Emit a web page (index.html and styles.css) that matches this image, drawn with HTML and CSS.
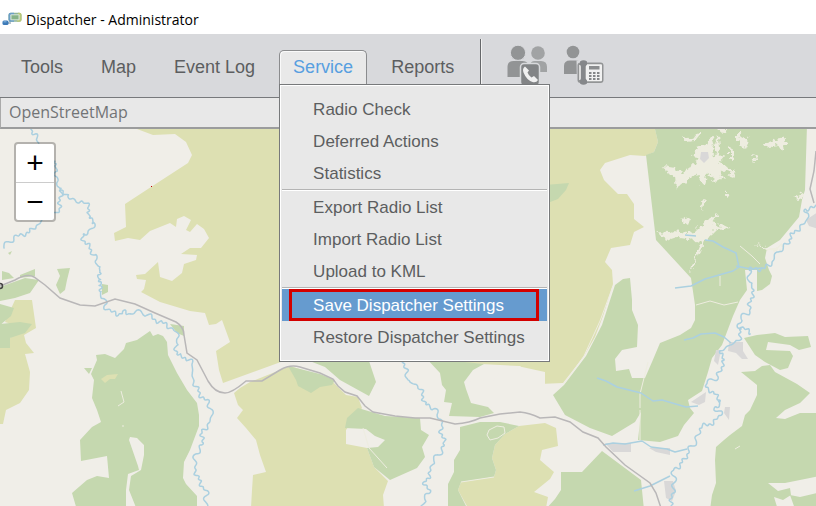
FILE: index.html
```html
<!DOCTYPE html>
<html lang="en">
<head>
<meta charset="utf-8">
<title>Dispatcher - Administrator</title>
<link rel="stylesheet" href="styles.css">
<script src="rivers.js" defer></script>
</head>
<body>
<header class="titlebar">
  <svg class="app-icon" viewBox="0 0 20 15" aria-hidden="true">
    <path d="M5 11h3V8" fill="none" stroke="#b9c4cc" stroke-width="2"/>
    <rect x="0.5" y="8.5" width="6" height="4.5" rx="1.5" fill="#3d7ab8"/>
    <rect x="1.5" y="9" width="3" height="1.5" fill="#6fa3d2"/>
    <rect x="6.5" y="0.8" width="13" height="9" rx="2.5" fill="#8fb59a"/>
    <path d="M9 .8h-.5a2 2 0 0 0-2 2v5a2 2 0 0 0 2 2H12V.8z" fill="#6b9fc6"/>
    <path d="M16 .8h1.5a2 2 0 0 1 2 2v5a2 2 0 0 1-2 2H15z" fill="#b9c878"/>
    <rect x="8.3" y="2.3" width="9.4" height="6" rx="1" fill="#d5e3d6"/>
    <rect x="9.5" y="3.3" width="7" height="4" fill="#86b287"/>
  </svg>
  <span>Dispatcher - Administrator</span>
</header>

<nav class="menubar">
  <button class="menu-button" type="button">Tools</button>
  <button class="menu-button" type="button">Map</button>
  <button class="menu-button" type="button">Event Log</button>
  <div class="menu-group">
    <button class="menu-button open" type="button" aria-expanded="true">Service</button>
    <div class="dropdown">
      <button type="button">Radio Check</button>
      <button type="button">Deferred Actions</button>
      <button type="button">Statistics</button>
      <hr>
      <button type="button">Export Radio List</button>
      <button type="button">Import Radio List</button>
      <button type="button">Upload to KML</button>
      <hr>
      <button class="selected" type="button">Save Dispatcher Settings</button>
      <button type="button">Restore Dispatcher Settings</button>
    </div>
  </div>
  <button class="menu-button" type="button">Reports</button>
  <div class="tools">
    <button class="tool" type="button" aria-label="Group call">
      <svg viewBox="0 0 42 40">
        <circle cx="31" cy="8" r="6.8" fill="#a1a3a4"/>
        <path d="M23 27v-6q0-5 5-5h6q6 0 6 6v5z" fill="#a1a3a4"/>
        <circle cx="11" cy="7.800" r="7.600" fill="#929495" stroke="#d8d9dc"/>
        <path d="M.5 32V22q0-6 6-6h9q6 0 6 6v10z" fill="#929495"/>
        <rect x="13.5" y="18.5" width="19" height="22" rx="3.5" fill="#828486" stroke="#d8d9dc" stroke-width="1.5"/>
        <path d="M18 21.500q-3 2-1.500 6 3 7.500 9 9.500 4 .8 5.500-2l-4-4-2.500 1.500q-3-2-4-5l1.500-2z" fill="#f0f0f0"/>
      </svg>
    </button>
    <button class="tool" type="button" aria-label="Phone call">
      <svg viewBox="0 0 42 40">
        <circle cx="10" cy="7" r="6.300" fill="#929495"/>
        <path d="M1 29v-8q0-5.500 6-5.500h6q5 0 5 5v8.500z" fill="#929495"/>
        <path d="M13.500 15.500h9l3 1.500h14q2 0 2 2v18q0 2-2 2H26l-3 1.500h-9z" fill="#d8d9dc"/>
        <rect x="14.500" y="17.500" width="26" height="20.500" rx="3" fill="#929495"/>
        <rect x="16.200" y="20" width="1.600" height="15" fill="#ececec"/>
        <rect x="22.500" y="19.200" width="16.500" height="17" rx="1" fill="#f1f1f1"/>
        <rect x="26" y="21" width="10.500" height="3.500" fill="#8b8d8f"/>
        <path d="M26 28h2.500m1.500 0h2.500m1.500 0h2.500m-10.500 3h2.500m1.500 0h2.500m1.500 0h2.500m-10.500 3h2.500m1.500 0h2.500m1.500 0h2.500" fill="none" stroke="#848688" stroke-width="2"/>
        <path d="M17 16.500q3.500-2.500 7 0v3l-1.500 2v12l1.500 2v3q-3.500 2.500-7 0v-3l1-2v-12l-1-2z" fill="#85878a"/>
      </svg>
    </button>
  </div>
</nav>

<div class="source">OpenStreetMap</div>

<main class="map">
  <svg class="terrain" viewBox="0 129 816 377" preserveAspectRatio="xMinYMin slice" aria-label="Map">
    <defs>
      <filter id="rough" filterUnits="userSpaceOnUse" x="-10" y="110" width="840" height="410">
        <feTurbulence type="fractalNoise" baseFrequency=".2" numOctaves="2" seed="7"/>
        <feDisplacementMap in="SourceGraphic" scale="9" xChannelSelector="R" yChannelSelector="G"/>
        <feGaussianBlur stdDeviation=".4"/>
      </filter>
    </defs>

    <g class="farmland">
      <path d="M137 129L153 135 175 134 186 142 192 155 188 163 151 187 125 204 126 227 114 233 115 241 128 238 140 240 150 231 170 223 176 227 177 219 184 216 191 220 186 230 190 232 197 224 204 229 209 238 201 248 190 248 181 254 197 255 196 260 184 264 182 273 172 281 160 277 158 262 145 274 136 275 137 279 146 280 144 289 141 292 160 302 190 311 205 313 209 325 216 324 222 320 230 342 216 351 219 370 223 383 300 355 481 364 500 365 520 366 535 376 540 384 563 383 584 356 595 337 603 316 613 284 612 270 605 262 611 248 630 245 634 232 644 227 634 219 634 204 627 194 618 194 604 180 600 170 605 163 630 155 645 156 654 152 658 142 655 129Z"/>
      <path d="M250 382L240 388 234 393 238 405 243 410 237 418 246 428 256 440 260 455 266 472 253 475 252 490 251 508H384L383 495 388 481 374 467 367 448 346 444 346 430 362 408 358 397 346 395 330 379 290 366Z"/>
      <path d="M461 482L494 477 496 470 492 458 495 445 505 434 519 426 545 423 556 428 558 446 542 450 540 460 554 472 550 479 534 492 548 497 546 508H468L458 490Z"/>
      <path d="M15 300L32 300 34 314 36 328 24 335 26 343 34 353 25 354 30 372 29 390 20 403 6 410 3 424H0V345L10 338 24 328 5 322Z"/>
    </g>
    <path class="ground" d="M492 382L500 372 522 367 545 372V412L500 410 484 406 471 403 466 389 473 378Z"/>

    <g class="forest">
      <path d="M0 287L25 278 39 280 30 293 15 298 0 301ZM0 304L14 308 11 316 0 325ZM0 324L20 322 32 324 25 333 10 338 10 348H0ZM57 269L70 268 67 280 65 290 60 294 56 285 60 276ZM102 284l6 1v7l-6 3zM170 324l14 2v10l-7-3zM84 368l8 0-3 6z"/>
      <path d="M2 271l7 2 5 5-12 2zM20 275l15-6 0 7-15 2zM8 253l4-2-2 4z"/>
      <path d="M150 331L153 336 158 334 163 336 167 342 168 355 177 373 187 390 197 403 199 415 199 426 190 450 184 462 183 478 186 484 197 496V510H137L129 490 131 476 141 470 144 455 144 445 137 438 130 437 129 440 138 466 139 470 128 474 126 490V510H77L72 493 87 480 97 476 109 478 107 456 81 461 80 440 92 427 101 422 97 410 92 398 94 380 91 374 97 360 96 355 105 354 115 358 124 349 126 343 137 340Z"/>
      <path d="M288 366L296 380 298 386 311 393 320 387 332 385 335 380 320 374ZM302 358L325 367 340 380 369 396 376 382 368 358ZM347 418L358 408 385 416 420 418 421 430 429 435 422 447 425 457 417 468 390 480 374 467 367 448 378 447 385 440 375 436 366 429 345 428Z"/>
      <path d="M426 358L440 373 442 385 446 390 444 402 452 403 449 416 480 417 494 413 488 407 471 403 466 389 464 382 473 370 484 364ZM460 427L480 422 500 422 519 426 505 434 495 445 492 458 496 470 494 477 461 482 458 490 468 510H448V484L454 472 454 460 460 450ZM545 185L569 183 566 190 558 199 545 204Z"/>
      <path d="M654 125H807L805 190 802 200 799 217 780 240 767 248 765 258 769 270 772 276 770 284 762 290 757 291 757 270 745 270 747 290 740 300 733 316 722 345 712 358 708 372 702 391 688 400 690 408 694 413 684 425 678 436 660 442 638 440 641 412 635 422 612 436 590 428 565 415 553 395 564 385 586 356 602 325 615 285 623 279 630 278 632 300 632 310 638 325 637 347 622 350 615 359 616 371 629 369 632 378 645 378 652 362 660 343 680 335 691 328 695 320 695 305 691 278 656 240 646 155 654 152 658 142Z"/>
      <path d="M744 338L757 335 775 333 785 337 808 336 811 347 799 350 790 345 768 342 766 350 790 351 793 356 788 368 780 370 765 362 755 355ZM741 372L755 371 762 366 770 365 775 372 797 384 810 393 800 403 785 410 776 418 785 419 800 413 825 413V475L800 480 785 483 768 483 778 491 790 488 791 495 783 500 774 497 778 510H710L712 495 716 483 715 460 716 447 724 440 730 435 742 426 745 415 750 410 757 395 757 385ZM561 472L582 472 602 451 641 480 644 510H545L555 499 561 490ZM790 495l10 2 25-6v18h-30z"/>
    </g>

    <g class="clearing" filter="url(#rough)">
      <path d="M663 166l12 2 8 5 11-8 4-8-6-1 6-8 8-3 5-9 3 9-2 8 5 4 8-1-5 6 8 7 7 0-7 4-9-3 3 8-6 3-9-8-2 13-4-2-3-10-8 3-9 7-4 6-1-10-7-6z"/>
      <path d="M683 136l10 2 5-6 4 0-7 9-9 1zM714 143l5-8 1 13-2 12zM738 131l4 5 6 3-4 9-6-6zM763 144l13-5 10-2-1 8-3 7-4-7-14 2zM753 154l5 2-3 7zM725 190l4 5-4 1zM716 129h12l-6 5zM794 198l10-5-1 7z"/>
      <path d="M655 232l15 1 5-2 12 2 8-1 6-6 7-8 9-3-5 8 20 5-15 1-6 6-6 4-4 12-5 8-2 9-4 4 5-14 6-14-12-5-13-1-6 2-8-4zM681 220l10-3-3 8zM755 243l12 4 8 0 8-3-5 8-9-1z"/>
      <path d="M705 198l-2 12-2-8zM732 170l5 8-8-3zM717 167l8 12-3-1zM690 140l-8-4 4 7zM730 145l5 12-5 2z"/>
    </g>

    <g class="track">
      <path d="M613 286L600 321 584 356 564 384M648 362L644 378 640 394 640 408M640 410V440M696 305L710 301 724 305 738 302M735 449l5-3M720 276v10M363 428l6 20 18 20M461 482l33-5M740 246l12 10 8 8"/>
      <path d="M489 430l8-4 7 1 1 6-7 5-8 2-3-5z"/>
      <path d="M121 391l3 11-6 4M123 425v2"/>
    </g>
    <path class="sand" d="M101 379l6-4 11-1-3 5-5 0-5 4z"/>

    <g class="town">
      <path d="M701 152l7 0 1 6-5 5-4-4zM729 342l14 0 0 9 5 8-6 0-6-6-8-2zM691 402l15-10-1 10-6 3zM605 443h26v9h-18zM649 448l21 0 0 7-14-3zM664 481l9 0 3 10-4 10-6-3zM716 350l5 0-3 15-4-4zM725 407l5 0-1 13-5-7zM806 220l12-8v17l-9-3z"/>
    </g>

    <g class="river">
      <path class="winding" d="M33 127L32 133 38 138 39 145M55 160L57 165 54 172 58 178 56 185 62 190 60 196 60 208 55 215 40 222 30 232 15 237 2 248M61 187L67 198 72 197 77 204 83 200 88 206 90 212 88 218 96 222 92 227 88 235 82 233 84 242 91 248 93 256 98 259 97 268 102 272 97 280 103 285 98 292 105 298 104 306 110 311 118 315 123 311 128 315 135 311 147 314 155 320 165 324 174 330 180 337 175 344 178 356 187 358 193 363 192 378 200 395 208 402 213 415 208 425 201 434 203 445 195 455 195 470 200 483 207 492 205 508"/>
      <path class="winding" d="M404 360L406 372 408 382 418 385 423 395 425 405 435 408 438 416 442 420 441 432 445 445 440 453 432 462 430 475 424 482 430 493 423 500V508"/>
      <path class="winding" d="M818 207L804 209 809 215 806 222 797 230 790 237 788 244 780 250 774 257 771 265 762 269 748 269 750 275 749 284 755 290 750 300 750 312 740 318 738 326 747 330 752 334M742 328L738 342 728 345 724 350 719 353 725 360 720 370 718 378 706 382 705 388 714 392 717 398 722 402 714 407 722 414 713 423 700 427 697 440 690 448 687 455 680 466 672 470 675 482 672 495 671 508"/>
      <path d="M675 288l16-2 14-7 28-8 6-4-3-14-13-6-10-6-8-1M736 266l15 3 11-1M684 340l9-2 8-4 14-1 9 4 7 6M597 378l9 3 11 6 24 6 12 8 9-1 24 7 12-1M603 445l10-2 12 1 17-3 9 6 16 2 8 3 12-3M634 491l16-5 20-10M685 235l11 1"/>
    </g>

    <path class="rail" d="M0 286L15 280Q27 273 34 277L45 285 60 298 80 305 95 306 115 299 135 304 155 313 176 322Q184 327 184 335L187 353 197 360 208 381Q215 393 225 393 232 393 246 381L262 381 280 370Q290 364 300 367L320 373 333 379 338 386 345 392 357 396 365 406 373 412 395 416 415 418 430 418 455 424Q470 423 480 418L500 414 520 412Q530 413 540 418L555 417 570 422 583 432 598 438 606 447 625 465 650 483 656 493 661 508M816 151l-2 20-4 18 4 14"/>
    <circle cx="0" cy="286" r="2.500" fill="none" stroke="#444" stroke-width="1.500"/>
    <rect x="151" y="186" width="1" height="1" fill="#c00000"/>
  </svg>
  <div class="zoom">
    <button type="button" aria-label="Zoom in">+</button>
    <button type="button" aria-label="Zoom out">−</button>
  </div>
</main>
</body>
</html>
```
FILE: rivers.js
```js
// Adds small meanders to the courses of the large rivers.
document.querySelectorAll(".winding").forEach((path) => {
  const courses = path.getAttribute("d").split(/(?=M)/);
  path.setAttribute("d", courses.map((course) => {
    const probe = document.createElementNS("http://www.w3.org/2000/svg", "path");
    probe.setAttribute("d", course);
    const length = probe.getTotalLength();
    const points = [];
    for (let s = 0; s < length; s += 0.7) {
      const a = probe.getPointAtLength(Math.max(0, s - 2));
      const b = probe.getPointAtLength(Math.min(length, s + 2));
      const size = Math.hypot(b.x - a.x, b.y - a.y) || 1;
      const swing = 1.3 * Math.sin(s * 0.8 + 2.5 * Math.sin(s * 0.13)) + 1.3 * Math.sin(s * 0.43);
      const x = (a.x + b.x) / 2 - (b.y - a.y) / size * swing;
      const y = (a.y + b.y) / 2 + (b.x - a.x) / size * swing;
      points.push(x.toFixed(1) + " " + y.toFixed(1));
    }
    return "M" + points.join("L");
  }).join(""));
});
```
FILE: styles.css
```css
* { box-sizing: border-box; }

body {
  margin: 0;
  min-height: 100vh;
  display: flex;
  flex-direction: column;
  font-family: "Liberation Sans", Arial, sans-serif;
  color: #5c5e60;
}

button {
  margin: 0;
  border: 0;
  background: none;
  font: inherit;
  color: inherit;
}

.titlebar {
  height: 34px;
  display: flex;
  align-items: center;
  gap: 4px;
  padding: 5px 2px 0;
  background: #fff;
  color: #000;
  font: 14px/20px "Open Sans", sans-serif;
}

.app-icon { width: 20px; height: 15px; }

.menubar {
  height: 64px;
  display: flex;
  align-items: flex-start;
  gap: 10px;
  padding: 4px 7px 0;
  background: #d8d9dc;
  border-bottom: 1px solid #77797c;
  font-size: 18px;
}

.menu-button {
  height: 34px;
  margin-top: 12px;
  padding: 0 13px;
  border: 1px solid transparent;
  border-bottom: 0;
  border-radius: 5px 5px 0 0;
  white-space: nowrap;
}

.menu-button.open {
  background: #e9e9e9;
  border-color: #8b8c8e;
  box-shadow: inset 1px 1px #fafafa;
  color: #589fe0;
}

.menu-group { position: relative; }

.dropdown {
  position: absolute;
  z-index: 2;
  top: 46px;
  left: 0;
  width: 271px;
  padding: 8px 2px;
  border: 1px solid #77797b;
  background: #e8e8e8;
  box-shadow: inset 0 0 0 1px #fff;
  font-size: 17px;
}

.dropdown button {
  display: block;
  position: relative;
  width: 100%;
  height: 32px;
  padding: 2px 31px 0;
  text-align: left;
  white-space: nowrap;
}

.dropdown hr {
  height: 2px;
  margin: 0;
  border: 0;
  border-top: 1px solid #b4b4b4;
  background: #fff;
}

.dropdown .selected {
  background: #669bcf;
  color: #fff;
}

.dropdown .selected::after {
  content: "";
  position: absolute;
  inset: 0 8px 0 7px;
  border: 3px solid #d30000;
}

.tools {
  display: flex;
  gap: 14px;
  height: 46px;
  margin: 1px 0 0 2px;
  padding: 6px 0 0 26px;
  border-left: 1px solid #66686a;
  box-shadow: inset 1px 0 #f2f2f2;
}

.tool {
  width: 42px;
  height: 40px;
  padding: 0;
}

.tool svg { display: block; width: 100%; height: 100%; }

.source {
  height: 31px;
  padding: 0 8px;
  border-left: 1px solid #aaa;
  border-bottom: 2px solid #9b9c9d;
  background: #e8e8e8;
  color: #727476;
  font: 16px/29px "Open Sans", sans-serif;
}

.map {
  position: relative;
  flex: 1;
  min-height: 240px;
  overflow: hidden;
  padding: 13px 14px;
  background: #f0eee8;
}

.terrain {
  position: absolute;
  inset: 0;
  width: 100%;
  height: 100%;
}

.farmland, .sand { fill: #dde0b2; }
.ground { fill: #f0eee8; }
.forest { fill: #c5d8af; }
.clearing { fill: #eeede0; }
.town { fill: #d9d8d8; }
.track { fill: none; stroke: #eeede0; stroke-width: 1; }
.river { fill: none; stroke: #abd0e0; stroke-width: 1.5; stroke-linejoin: round; }
.rail { fill: none; stroke: #b9b7b8; stroke-width: 1.5; }

.zoom {
  position: relative;
  width: 42px;
  border: 2px solid rgba(0, 0, 0, 0.25);
  border-radius: 4px;
  background: #fff;
  background-clip: padding-box;
}

.zoom button {
  display: block;
  width: 100%;
  height: 38px;
  padding: 0;
  color: #000;
  font-size: 30px;
  line-height: 38px;
}

.zoom button + button { border-top: 1px solid #ccc; }
```
